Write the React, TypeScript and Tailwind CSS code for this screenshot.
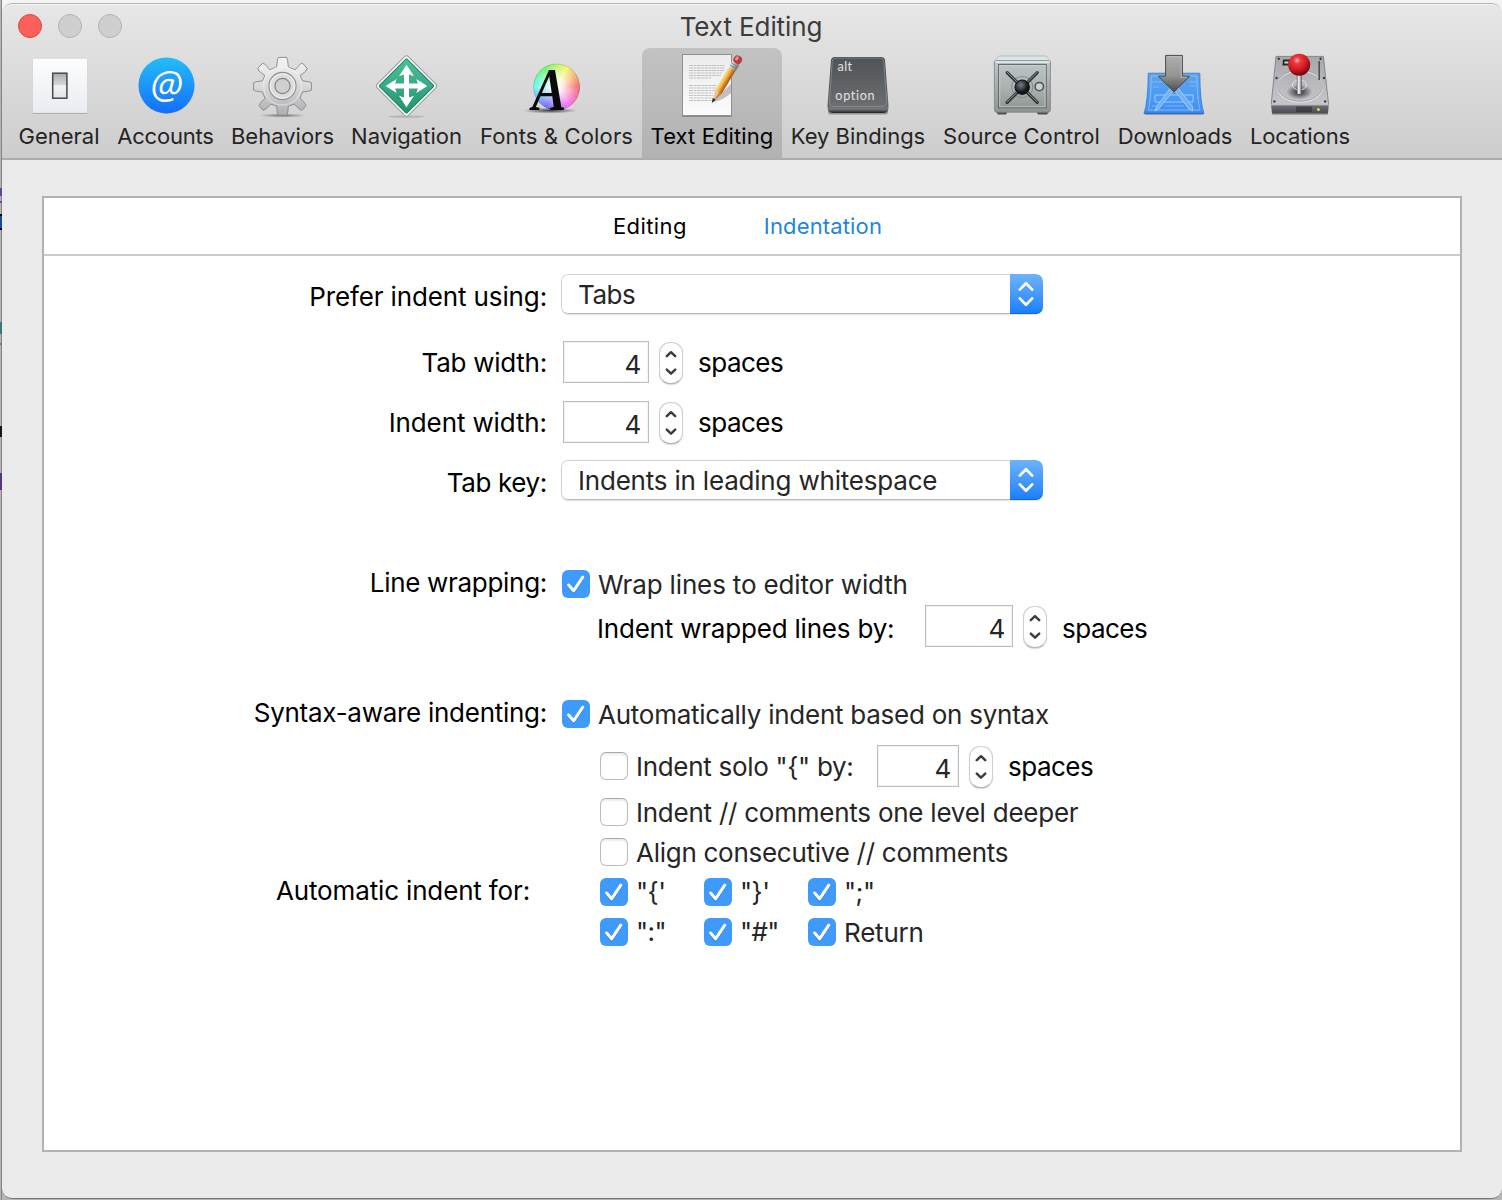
import React from "react";

/* ---------- toolbar icons (64 x 64) ---------- */

function IconFrame({ children }: { children: React.ReactNode }) {
  return (
    <svg width="64" height="64" viewBox="0 0 64 64" className="block shrink-0 overflow-visible">
      {children}
    </svg>
  );
}

function GeneralIcon() {
  return (
    <IconFrame>
      <defs>
        <linearGradient id="gen-plate" x1="0" y1="0" x2="0" y2="1">
          <stop offset="0" stopColor="#fdfdfe" />
          <stop offset="1" stopColor="#e9ecf0" />
        </linearGradient>
        <linearGradient id="gen-switch" x1="0" y1="0" x2="0" y2="1">
          <stop offset="0" stopColor="#a9abb0" />
          <stop offset="0.45" stopColor="#d4d6da" />
          <stop offset="0.5" stopColor="#f1f4f6" />
          <stop offset="1" stopColor="#dfe4e8" />
        </linearGradient>
      </defs>
      <rect x="5.5" y="5" width="55" height="55" rx="1" fill="#9aa0a6" />
      <rect x="5.5" y="4.5" width="55" height="54.6" rx="1" fill="url(#gen-plate)" stroke="#d3d5d8" strokeWidth="0.6" />
      <rect x="25.7" y="19.2" width="14.2" height="25" fill="url(#gen-switch)" stroke="#46484c" strokeWidth="1.5" />
    </IconFrame>
  );
}

function AccountsIcon() {
  return (
    <IconFrame>
      <defs>
        <linearGradient id="acc-disc" x1="0" y1="0" x2="0" y2="1">
          <stop offset="0" stopColor="#24bdf8" />
          <stop offset="1" stopColor="#146ffb" />
        </linearGradient>
      </defs>
      <circle cx="32.5" cy="32" r="28" fill="#00000022" />
      <circle cx="32.5" cy="31.4" r="28" fill="url(#acc-disc)" />
      <text x="32.9" y="45.4" textAnchor="middle" fontFamily="Open Sans" fontSize="38" fontStyle="italic" fill="#1457b5" opacity="0.5">@</text>
      <text x="32.5" y="44.6" textAnchor="middle" fontFamily="Open Sans" fontSize="38" fontStyle="italic" fill="#ffffff">@</text>
    </IconFrame>
  );
}

function BehaviorsIcon() {
  return (
    <IconFrame>
      <defs>
        <linearGradient id="beh-metal" x1="0" y1="0" x2="0" y2="64" gradientUnits="userSpaceOnUse">
          <stop offset="0" stopColor="#f8f8f8" />
          <stop offset="0.5" stopColor="#d9d9da" />
          <stop offset="1" stopColor="#a9aaac" />
        </linearGradient>
        <radialGradient id="beh-shadow">
          <stop offset="0" stopColor="#000000" stopOpacity="0.45" />
          <stop offset="1" stopColor="#000000" stopOpacity="0" />
        </radialGradient>
      </defs>
      <ellipse cx="31.5" cy="61.5" rx="24" ry="2.2" fill="url(#beh-shadow)" />
      <g fill="url(#beh-metal)" stroke="#85888c" strokeWidth="0.9" strokeLinejoin="round">
        <path d="M27.3 3.4H35.7L36.6 6.2L37.4 13L44.2 15.8L48.9 10.3L51.3 9L56.2 14.3L54.8 17.2L49.2 21.6L51.6 26.8L57.4 27.7L60.4 28.6V36.2L57.4 37.2L51.6 38L49 44.2L53.6 49L55 51.6L51 56.4L48 54.8L43.4 50.2L37.4 52L36.8 58L35.9 61.2H27.1L26.2 58L25.6 52L19.6 50.2L15 54.8L12 56.4L8 51.6L9.4 49L14 44.2L11.4 38L5.6 37.2L2.6 36.2V28.6L5.6 27.7L11.4 26.8L13.8 21.6L8.2 17.2L6.8 14.3L11.7 9L14.1 10.3L18.8 15.8L25.6 13L26.4 6.2Z" />
        <circle cx="31.5" cy="32" r="13.6" fill="#dcdcde" stroke="#8f9094" strokeWidth="1.1" />
        <circle cx="31.5" cy="32" r="12.2" fill="none" stroke="#f2f2f2" strokeWidth="1" />
        <circle cx="31.5" cy="32" r="7.6" fill="#cfcfd0" stroke="#808388" strokeWidth="1.2" />
      </g>
      <circle cx="31.5" cy="32" r="19" fill="none" stroke="#ffffff" strokeOpacity="0.35" strokeWidth="1.4" />
    </IconFrame>
  );
}

function NavigationIcon() {
  return (
    <IconFrame>
      <defs>
        <linearGradient id="nav-green" x1="0" y1="0" x2="1" y2="1">
          <stop offset="0" stopColor="#52c89f" />
          <stop offset="0.5" stopColor="#3cb08a" />
          <stop offset="1" stopColor="#239670" />
        </linearGradient>
        <pattern id="nav-dots" width="3" height="3" patternUnits="userSpaceOnUse">
          <rect width="1.5" height="1.5" fill="#0c6b4a" fillOpacity="0.16" />
          <rect x="1.5" y="1.5" width="1.5" height="1.5" fill="#0c6b4a" fillOpacity="0.16" />
        </pattern>
      </defs>
      <ellipse cx="31.5" cy="62.6" rx="18" ry="1.1" fill="#000000" opacity="0.14" />
      <rect x="9.4" y="9.9" width="44.2" height="44.2" rx="3" transform="rotate(45 31.5 32)" fill="#ffffff" stroke="#97999b" strokeWidth="1" />
      <rect x="12" y="12.5" width="39" height="39" rx="0.8" transform="rotate(45 31.5 32)" fill="url(#nav-green)" />
      <rect x="12" y="12.5" width="39" height="39" rx="0.8" transform="rotate(45 31.5 32)" fill="url(#nav-dots)" stroke="#17805b" strokeWidth="1" />
      <path
        d="M31.5 10.8L39 22.2L34 20.6V29.5H42.9L41.3 25L52.4 32L41.3 39L42.9 34.5H34V43.4L39 41.8L31.5 53.2L24 41.8L29 43.4V34.5H20.1L21.7 39L10.6 32L21.7 25L20.1 29.5H29V20.6L24 22.2Z"
        fill="#ffffff"
      />
    </IconFrame>
  );
}

const WHEEL_STEPS = Array.from({ length: 72 }, (_, i) => i * 5);

function FontsIcon() {
  const point = (deg: number) => {
    const a = (deg * Math.PI) / 180;
    return `${(31.6 + 23 * Math.cos(a)).toFixed(2)} ${(33 - 23 * Math.sin(a)).toFixed(2)}`;
  };
  return (
    <IconFrame>
      <defs>
        <radialGradient id="fnt-white">
          <stop offset="0" stopColor="#ffffff" stopOpacity="1" />
          <stop offset="0.3" stopColor="#ffffff" stopOpacity="0.85" />
          <stop offset="0.85" stopColor="#ffffff" stopOpacity="0.36" />
          <stop offset="1" stopColor="#ffffff" stopOpacity="0.28" />
        </radialGradient>
        <radialGradient id="fnt-shadow">
          <stop offset="0" stopColor="#000000" stopOpacity="0.7" />
          <stop offset="1" stopColor="#000000" stopOpacity="0" />
        </radialGradient>
      </defs>
      {WHEEL_STEPS.map((d) => (
        <path key={d} d={`M31.6 33L${point(d - 0.5)}A23 23 0 0 0 ${point(d + 5.5)}Z`} fill={`hsl(${d} 90% 58%)`} />
      ))}
      <circle cx="31.6" cy="33" r="23" fill="url(#fnt-white)" stroke="#00000030" strokeWidth="0.7" />
      <ellipse cx="25" cy="56.6" rx="27" ry="3" fill="url(#fnt-shadow)" />
      <text x="0" y="0" transform="translate(7 56) scale(0.84 1)" fontFamily="Liberation Serif" fontSize="61" fontWeight="700" fontStyle="italic" fill="#0a0a0a">A</text>
    </IconFrame>
  );
}

const TEXT_LINES = [11.5, 14, 16.5, 19, 21.5, 24, 31.5, 34, 36.5, 39, 41.5, 44, 46.5];

function TextEditingIcon() {
  return (
    <IconFrame>
      <defs>
        <linearGradient id="txt-paper" x1="0" y1="0" x2="0" y2="1">
          <stop offset="0" stopColor="#ececec" />
          <stop offset="1" stopColor="#fbfbfb" />
        </linearGradient>
        <linearGradient id="txt-wood" x1="0" y1="0" x2="1" y2="0">
          <stop offset="0" stopColor="#f9e08a" />
          <stop offset="0.4" stopColor="#f0b548" />
          <stop offset="0.65" stopColor="#d98324" />
          <stop offset="1" stopColor="#9c5413" />
        </linearGradient>
        <linearGradient id="txt-metal" x1="0" y1="0" x2="1" y2="0">
          <stop offset="0" stopColor="#e8ecee" />
          <stop offset="1" stopColor="#6d7a80" />
        </linearGradient>
      </defs>
      <rect x="2" y="1" width="50" height="62" fill="#000000" opacity="0.25" />
      <rect x="2.5" y="0.5" width="49" height="61" fill="url(#txt-paper)" stroke="#8c8c8c" strokeWidth="0.9" />
      {TEXT_LINES.map((y, i) => (
        <path key={y} d={`M9 ${y}H${i === 5 ? 31 : i > 8 ? 33 : i > 5 ? 37 : 45 - (i > 2 ? i : 0)}`} stroke="#c2c2c2" strokeWidth="1" strokeDasharray="4 0.6 2.6 0.5" />
      ))}
      <path d="M32 48.5L51 30V39Q44 46 32 48.5Z" fill="#000000" opacity="0.22" />
      <g transform="translate(32 48.6) rotate(31)">
        <path d="M0 0L-3.7 -12L-3.7 -38H3.7L3.7 -12Z" fill="#ecc493" />
        <path d="M0 0L3.7 -12H1Z" fill="#b98552" />
        <path d="M-3.7 -11.5L-1.5 -13L1.3 -11.5L3.7 -12.5V-40H-3.7Z" fill="url(#txt-wood)" />
        <path d="M0 0.6L-1.6 -4.4H1.6Z" fill="#1d1d1d" />
        <rect x="-4" y="-46.5" width="8" height="7.4" fill="url(#txt-metal)" />
        <path d="M-4 -41.6H4M-4 -44H4" stroke="#65727a" strokeWidth="0.7" />
        <rect x="-4.2" y="-54" width="8.4" height="8" rx="3.6" fill="#b83d42" />
        <rect x="-2.9" y="-53" width="3" height="4.5" rx="1.5" fill="#ea9292" />
      </g>
    </IconFrame>
  );
}

function KeyIcon() {
  return (
    <IconFrame>
      <defs>
        <linearGradient id="key-face" x1="0" y1="0" x2="0" y2="1">
          <stop offset="0" stopColor="#515457" />
          <stop offset="1" stopColor="#6b6e71" />
        </linearGradient>
        <linearGradient id="key-side" x1="0" y1="0" x2="0" y2="1">
          <stop offset="0" stopColor="#3c3e40" />
          <stop offset="0.85" stopColor="#5d5f61" />
          <stop offset="0.93" stopColor="#77797b" />
          <stop offset="1" stopColor="#1d1e1f" />
        </linearGradient>
      </defs>
      <rect x="2" y="55" width="60" height="5.6" rx="2.8" fill="#000000" opacity="0.3" />
      <path d="M9 3H55Q58.6 3 59 6.6L62.5 52Q63 59 57.5 59H7Q1 59 1.5 52L5 6.6Q5.4 3 9 3Z" fill="url(#key-side)" />
      <path d="M9.4 4H54.6Q57.4 4 57.8 7L60.8 48Q60.8 52.4 57 52.4H7.2Q3 52.4 3.4 48L6.2 7Q6.6 4 9.4 4Z" fill="url(#key-face)" stroke="#8e9193" strokeWidth="0.8" />
      <g className="font-[Lato,sans-serif] text-[12.6px]" fill="#e2e2e2">
        <text x="11.6" y="17.2" letterSpacing="0.4">alt</text>
        <text x="9.3" y="46.4" letterSpacing="0.7">option</text>
      </g>
    </IconFrame>
  );
}

function SafeIcon() {
  return (
    <IconFrame>
      <defs>
        <linearGradient id="safe-body" x1="0" y1="0" x2="0" y2="1">
          <stop offset="0" stopColor="#bfc7c8" />
          <stop offset="1" stopColor="#8f9393" />
        </linearGradient>
        <linearGradient id="safe-door" x1="0" y1="0" x2="0" y2="1">
          <stop offset="0" stopColor="#bcc4c5" />
          <stop offset="0.6" stopColor="#a9aead" />
          <stop offset="1" stopColor="#939695" />
        </linearGradient>
        <radialGradient id="safe-hub" cx="0.4" cy="0.35">
          <stop offset="0" stopColor="#76808a" />
          <stop offset="1" stopColor="#101418" />
        </radialGradient>
      </defs>
      <path d="M5.5 57H18L16 60.5H8Z M46 57H59.5L57 60.5H48Z" fill="#4c4f50" />
      <path d="M9 2H56L60.4 7V12H4.2V7Z" fill="#dbe6e8" stroke="#9ba4a6" strokeWidth="0.6" />
      <rect x="4.4" y="6.6" width="56" height="51.6" rx="2.5" fill="url(#safe-body)" stroke="#7c8182" strokeWidth="0.8" />
      <path d="M5.4 8H59.6" stroke="#e9f1f2" strokeWidth="1.4" />
      <rect x="8.6" y="10.4" width="47.6" height="43.4" fill="url(#safe-door)" stroke="#5f6465" strokeWidth="1" />
      <rect x="9.8" y="11.6" width="45.2" height="41.2" fill="none" stroke="#cfd5d6" strokeWidth="0.7" />
      <circle cx="32.2" cy="33" r="10.6" fill="none" stroke="#868b8c" strokeWidth="1" />
      <path d="M17.2 18.6L47.2 48.4M47.2 18.6L17.2 48.4" stroke="#2f3335" strokeWidth="3.2" strokeLinecap="round" />
      <path d="M17.2 18.2L47.2 48M47.2 18.2L17.2 48" stroke="#8f989b" strokeWidth="1" strokeLinecap="round" />
      <circle cx="32.2" cy="33.2" r="7.2" fill="url(#safe-hub)" stroke="#0f1113" strokeWidth="1" />
      <circle cx="49.3" cy="32.6" r="4.2" fill="#c9d0d1" stroke="#4d5253" strokeWidth="1.5" />
    </IconFrame>
  );
}

function DownloadsIcon() {
  return (
    <IconFrame>
      <defs>
        <linearGradient id="dl-sheet" x1="0" y1="0" x2="0" y2="1">
          <stop offset="0" stopColor="#5da4ea" />
          <stop offset="0.6" stopColor="#4a9bf6" />
          <stop offset="1" stopColor="#3f8cf0" />
        </linearGradient>
        <linearGradient id="dl-arrow" x1="0" y1="0" x2="0" y2="1">
          <stop offset="0" stopColor="#aeaeae" />
          <stop offset="0.55" stopColor="#959595" />
          <stop offset="1" stopColor="#4b4b4b" />
        </linearGradient>
      </defs>
      <path d="M2 61H60L58 58H4Z" fill="#000000" opacity="0.25" />
      <path d="M5.2 19.2H56.8Q57 48 61 59.6H1Q5 48 5.2 19.2Z" fill="url(#dl-sheet)" stroke="#3579cf" strokeWidth="0.8" />
      <path d="M1.2 59.4H60.8" stroke="#2a6fd0" strokeWidth="1.2" />
      <g fill="none" stroke="#c3def9" strokeWidth="0.9" opacity="0.8">
        <path d="M8.2 22H53.8Q54 44 57 56H5.4Q8.2 44 8.2 22Z" opacity="0.7" />
        <path d="M12 41H50V48H12Z" />
        <path d="M27.5 34L13 53.5L12.4 57L15.4 55L31 36Z" fill="#7db8f5" />
        <path d="M35 34L49.6 52.5L49.6 57L46 55L31.5 36Z" fill="#7db8f5" />
        <path d="M9 28H19M10 33H16M46 28H53M47 32H52M9 52H14M22 52H41" opacity="0.6" />
      </g>
      <path d="M22.6 1.4H39.4V22.2H46.6L31 38L15.4 22.2H22.6Z" fill="url(#dl-arrow)" stroke="#4a4a4a" strokeWidth="1" strokeLinejoin="round" />
      <path d="M23.8 2.7H38.2V23.4H43.8" fill="none" stroke="#c9c9c9" strokeWidth="0.8" opacity="0.8" />
    </IconFrame>
  );
}

function LocationsIcon() {
  return (
    <IconFrame>
      <defs>
        <linearGradient id="loc-top" x1="0" y1="0" x2="0" y2="1">
          <stop offset="0" stopColor="#a8a8ac" />
          <stop offset="1" stopColor="#c6c6ca" />
        </linearGradient>
        <linearGradient id="loc-front" x1="0" y1="0" x2="0" y2="1">
          <stop offset="0" stopColor="#73737b" />
          <stop offset="1" stopColor="#4a4a52" />
        </linearGradient>
        <radialGradient id="loc-ball" cx="0.4" cy="0.3" r="0.7">
          <stop offset="0" stopColor="#ffb3ae" />
          <stop offset="0.22" stopColor="#ee3b3f" />
          <stop offset="0.65" stopColor="#cc1820" />
          <stop offset="1" stopColor="#6e060b" />
        </radialGradient>
        <radialGradient id="loc-shade">
          <stop offset="0" stopColor="#000000" stopOpacity="0.8" />
          <stop offset="1" stopColor="#000000" stopOpacity="0" />
        </radialGradient>
        <linearGradient id="loc-stick" x1="0" y1="0" x2="1" y2="0">
          <stop offset="0" stopColor="#666666" />
          <stop offset="0.4" stopColor="#ffffff" />
          <stop offset="1" stopColor="#555555" />
        </linearGradient>
      </defs>
      <rect x="4" y="58" width="56" height="3" rx="1.5" fill="#000000" opacity="0.25" />
      <path d="M8 2.4H55.4L60.6 50.5H3.2Z" fill="url(#loc-top)" stroke="#77777b" strokeWidth="0.8" />
      <path d="M3 50.5H60.8L60 59.4H4Z" fill="url(#loc-front)" />
      <path d="M3.2 50.8H60.6" stroke="#e6e6ea" strokeWidth="0.9" />
      <path d="M29 52.5V58M31 52.5V58M33 52.5V58M35 52.5V58M37 52.5V58M39 52.5V58M41 52.5V58M43 52.5V58" stroke="#24242a" strokeWidth="1" />
      <circle cx="50.4" cy="55.6" r="1.4" fill="#e9f23a" />
      <ellipse cx="32" cy="32.4" rx="23" ry="15.6" fill="none" stroke="#e4e4e8" strokeWidth="1.2" />
      <ellipse cx="32" cy="31.6" rx="23" ry="15.6" fill="none" stroke="#8b8b90" strokeWidth="0.6" />
      <path d="M51.2 7V26" stroke="#4f4f55" strokeWidth="1.6" />
      <path d="M15 5.6H24V11.6H14.4Z" fill="#28282c" />
      <path d="M16.6 7.6H20.6V9.6H16.4Z" fill="#d8d8dc" />
      <g fill="#3d3d42">
        <circle cx="10.8" cy="4.8" r="1.2" />
        <circle cx="52.6" cy="4.8" r="1.2" />
        <circle cx="8.6" cy="24" r="1.2" />
        <circle cx="56" cy="24" r="1.2" />
        <circle cx="6.4" cy="47.4" r="1.2" />
        <circle cx="57.2" cy="47.4" r="1.2" />
      </g>
      <ellipse cx="31.4" cy="38" rx="13" ry="7.6" fill="url(#loc-shade)" />
      <ellipse cx="31.4" cy="31" rx="7" ry="5" fill="none" stroke="#e8e8ea" strokeWidth="0.9" />
      <rect x="28.8" y="20" width="5" height="20" rx="1.4" fill="url(#loc-stick)" />
      <circle cx="31.2" cy="10.8" r="11" fill="url(#loc-ball)" />
    </IconFrame>
  );
}

/* ---------- toolbar ---------- */

function ToolbarItem({ label, icon, width, selected }: { label: string; icon: React.ReactNode; width: string; selected?: boolean }) {
  return (
    <button
      className={
        "flex h-[110px] shrink-0 flex-col items-center rounded-t-lg pt-1.5 " +
        width +
        (selected ? " bg-black/[0.13] text-black" : " text-[#242424]")
      }
    >
      {icon}
      <span className="mt-[5px] text-[22px] leading-[27px] whitespace-nowrap">{label}</span>
    </button>
  );
}

/* ---------- form controls ---------- */

function Select({ value, tracking }: { value: string; tracking: string }) {
  return (
    <button className="ml-[13px] flex h-10 w-[482px] overflow-hidden rounded-[7px] bg-white shadow-[0_1px_1px_rgba(0,0,0,0.12)]">
      <span className={"flex h-10 flex-1 items-center rounded-l-[7px] border border-r-0 border-[#d2d2d2] border-b-[#bcbcbc] pt-0.5 pl-4 text-[#262626] " + tracking}>
        {value}
      </span>
      <span className="flex h-10 w-[33px] items-center justify-center rounded-r-[7px] bg-linear-to-b from-[#6cb3fa] to-[#157efb] pr-px shadow-[inset_0_-1px_0_#0f68e0]">
        <svg width="16" height="26" viewBox="0 0 16 26" fill="none" stroke="#ffffff" strokeWidth="2.7" strokeLinecap="round" strokeLinejoin="round">
          <path d="M1.8 8.6L8 2.2L14.2 8.6M1.8 17.4L8 23.8L14.2 17.4" />
        </svg>
      </span>
    </button>
  );
}

function NumberField({ width }: { width: string }) {
  return (
    <span className={"flex h-[42px] shrink-0 items-center justify-end border border-[#bdbdbd] bg-white pt-1.5 pr-[7px] text-[#262626] shadow-[inset_0_0_0_1px_#f3f3f3] " + width}>
      4
    </span>
  );
}

function Stepper() {
  return (
    <span className="mt-0.5 ml-2.5 flex h-[42px] w-6 shrink-0 items-center justify-center rounded-[11px] border border-[#cfcfcf] border-b-[#b4b4b4] bg-white shadow-[0_1px_1px_rgba(0,0,0,0.15)]">
      <svg width="12" height="26" viewBox="0 0 12 26" fill="none" stroke="#3c3c3c" strokeWidth="2.5" strokeLinecap="round" strokeLinejoin="round">
        <path d="M1.8 6.2L6 2.2L10.2 6.2M1.8 19.6L6 23.6L10.2 19.6" />
      </svg>
    </span>
  );
}

function Checkbox({ checked }: { checked?: boolean }) {
  if (!checked) {
    return <span className="size-7 shrink-0 rounded-[6px] border border-[#bdbdbd] border-t-[#a8a8a8] bg-white shadow-[inset_0_2px_2px_rgba(0,0,0,0.08)]" />;
  }
  return (
    <span className="flex size-7 shrink-0 items-center justify-center rounded-[6px] bg-[#3f9afb]">
      <svg width="28" height="28" viewBox="0 0 28 28" fill="none" strokeLinecap="round" strokeLinejoin="round" strokeWidth="3">
        <path d="M6.6 16L11.6 21.8L20.8 8.2" stroke="#1c74d6" strokeOpacity="0.6" />
        <path d="M6.6 15L11.6 20.8L20.8 7.2" stroke="#ffffff" />
      </svg>
    </span>
  );
}

function Label({ children, className }: { children?: React.ReactNode; className?: string }) {
  return <span className={"w-[504px] shrink-0 text-right text-black " + (className ?? "")}>{children}</span>;
}

function Spaces({ className }: { className: string }) {
  return <span className={"text-black tracking-[-0.5px] " + className}>spaces</span>;
}

function SmallCheck({ label, className }: { label: string; className?: string }) {
  return (
    <span className="flex w-[104px] items-center">
      <Checkbox checked />
      <span className={"pl-2 text-[#262626] " + (className ?? "")}>{label}</span>
    </span>
  );
}

export default function App() {
  return (
    <div className="flex h-[1200px] w-[1502px] overflow-hidden bg-linear-to-b from-[#f4f4f4] via-[#c9c9c9] to-[#b5b5b5] pt-[3px] pb-px font-[Inter,sans-serif] whitespace-nowrap">
      {/* sliver of the editor behind the window */}
      <div className="-mt-[3px] flex h-[1200px] w-0.5 shrink-0 flex-col border-r border-[#858585] bg-[#b4b4b4]">
        <span className="mt-[188px] h-2 w-0.5 bg-[#6b41ad]" />
        <span className="mt-[5px] h-0.5 w-0.5 bg-[#6b41ad]" />
        <span className="mt-[11px] h-4 w-0.5 border-y-2 border-black bg-[#0e4db0]" />
        <span className="mt-[92px] h-3 w-0.5 bg-[#40757d]" />
        <span className="mt-[9px] h-0.5 w-0.5 bg-[#5d858a]" />
        <span className="mt-[81px] h-[11px] w-0.5 bg-[#171720]" />
        <span className="mt-[36px] h-[17px] w-0.5 bg-[#57318f]" />
      </div>

      <div className="flex min-w-0 flex-1 flex-col overflow-hidden rounded-[10px] border-b border-[#767676] bg-[#ebebeb]">
        <header className="flex h-[157px] shrink-0 flex-col rounded-t-[10px] border-t border-b-2 border-t-[#b3b3b3] border-b-[#adadad] bg-linear-to-b from-[#e7e7e7] to-[#cdcdcd] shadow-[inset_0_1px_0_#f5f5f5]">
          <div className="flex h-11 shrink-0 items-center">
            <div className="flex flex-1 gap-4 pl-4">
              <span className="size-6 rounded-full border border-[#e2463f] bg-[#fc605b]" />
              <span className="size-6 rounded-full border border-[#b3b3b3] bg-[#cfcfcf]" />
              <span className="size-6 rounded-full border border-[#b3b3b3] bg-[#cfcfcf]" />
            </div>
            <h1 className="pt-px pr-[18px] text-[26px] leading-8 tracking-[-0.1px] text-[#3c3c3c]">Text Editing</h1>
            <div className="flex-1" />
          </div>
          <nav className="flex pl-2">
            <ToolbarItem label="General" icon={<GeneralIcon />} width="w-[98px]" />
            <ToolbarItem label="Accounts" icon={<AccountsIcon />} width="w-[115px] tracking-[-0.2px]" />
            <ToolbarItem label="Behaviors" icon={<BehaviorsIcon />} width="w-[119px]" />
            <ToolbarItem label="Navigation" icon={<NavigationIcon />} width="w-[129px]" />
            <ToolbarItem label="Fonts & Colors" icon={<FontsIcon />} width="w-[171px] tracking-[0.15px]" />
            <ToolbarItem label="Text Editing" icon={<TextEditingIcon />} width="w-[140px] tracking-[0.1px]" selected />
            <ToolbarItem label="Key Bindings" icon={<KeyIcon />} width="w-[152px]" />
            <ToolbarItem label="Source Control" icon={<SafeIcon />} width="w-[175px] tracking-[0.1px]" />
            <ToolbarItem label="Downloads" icon={<DownloadsIcon />} width="w-[132px] tracking-[-0.15px]" />
            <ToolbarItem label="Locations" icon={<LocationsIcon />} width="w-[118px] tracking-[-0.1px]" />
          </nav>
        </header>

        <main className="mx-10 mt-9 mb-[46px] flex flex-1 flex-col border-2 border-[#b2b2b2] bg-white">
          <div className="flex h-[58px] shrink-0 items-center border-b-2 border-[#cacaca] text-[22px]">
            <button className="ml-[569px] tracking-[0.4px] text-black">Editing</button>
            <button className="ml-[77px] tracking-[0.15px] text-[#1f86da]">Indentation</button>
          </div>

          <div className="flex flex-col pt-[18px] text-[26px] leading-8 tracking-[-0.2px]">
            <div className="flex h-10 items-center">
              <Label className="pt-1.5 pr-px tracking-[-0.13px]">Prefer indent using:</Label>
              <Select value="Tabs" tracking="tracking-[-0.45px]" />
            </div>

            <div className="mt-[27px] flex h-[42px] items-center">
              <Label className="pt-0.5 pr-px tracking-[-0.25px]">Tab width:</Label>
              <NumberField width="ml-[15px] w-[86px]" />
              <Stepper />
              <Spaces className="pt-0.5 pl-[15px]" />
            </div>

            <div className="mt-[18px] flex h-[42px] items-center">
              <Label className="pt-0.5 pr-px tracking-[-0.12px]">Indent width:</Label>
              <NumberField width="ml-[15px] w-[86px]" />
              <Stepper />
              <Spaces className="pt-0.5 pl-[15px]" />
            </div>

            <div className="mt-[17px] flex h-10 items-center">
              <Label className="pt-1.5 pr-px tracking-[-0.35px]">Tab key:</Label>
              <Select value="Indents in leading whitespace" tracking="tracking-[-0.2px]" />
            </div>

            <div className="mt-[70px] flex h-7 items-center">
              <Label className="pr-px pb-0.5 tracking-[-0.3px]">Line wrapping:</Label>
              <span className="ml-3.5 flex items-center">
                <Checkbox checked />
                <span className="pt-0.5 pl-2 tracking-[-0.15px] text-[#262626]">Wrap lines to editor width</span>
              </span>
            </div>

            <div className="mt-[7px] flex h-[42px] items-center">
              <span className="ml-[553px] w-[328px] shrink-0 pt-1.5 tracking-[-0.2px] text-black">Indent wrapped lines by:</span>
              <NumberField width="w-[88px]" />
              <Stepper />
              <Spaces className="pt-1.5 pl-[15px]" />
            </div>

            <div className="mt-[53px] flex h-7 items-center">
              <Label className="pr-px pb-0.5 tracking-[-0.27px]">Syntax-aware indenting:</Label>
              <span className="ml-3.5 flex items-center">
                <Checkbox checked />
                <span className="pt-0.5 pl-2 tracking-[-0.25px] text-[#262626]">Automatically indent based on syntax</span>
              </span>
            </div>

            <div className="mt-[17px] flex h-[42px] items-center pl-[556px]">
              <Checkbox />
              <span className="w-[249px] pt-0.5 pl-2 tracking-[-0.3px] text-[#262626]">{'Indent solo "{" by:'}</span>
              <NumberField width="w-[82px]" />
              <Stepper />
              <Spaces className="pt-0.5 pl-[15px]" />
            </div>

            <div className="mt-[11px] flex h-7 items-center pl-[556px]">
              <Checkbox />
              <span className="pt-0.5 pl-2 tracking-[-0.24px] text-[#262626]">Indent // comments one level deeper</span>
            </div>

            <div className="mt-3 flex h-7 items-center pl-[556px]">
              <Checkbox />
              <span className="pt-0.5 pl-2 tracking-[-0.27px] text-[#262626]">Align consecutive // comments</span>
            </div>

            <div className="mt-3 flex h-7 items-center">
              <Label className="pr-[18px] pb-0.5 tracking-[-0.15px]">Automatic indent for:</Label>
              <span className="flex pl-[52px]">
                <SmallCheck label={'"{\''} className="tracking-[-0.5px]" />
                <SmallCheck label={'"}\''} className="tracking-[-0.5px]" />
                <SmallCheck label={'";"'} className="tracking-[-0.5px]" />
              </span>
            </div>

            <div className="mt-3 flex h-7 items-center pl-[556px]">
              <SmallCheck label={'":"'} className="tracking-[-0.5px]" />
              <SmallCheck label={'"#"'} className="tracking-[-0.7px]" />
              <SmallCheck label="Return" className="pt-0.5" />
            </div>
          </div>
        </main>
      </div>
    </div>
  );
}
